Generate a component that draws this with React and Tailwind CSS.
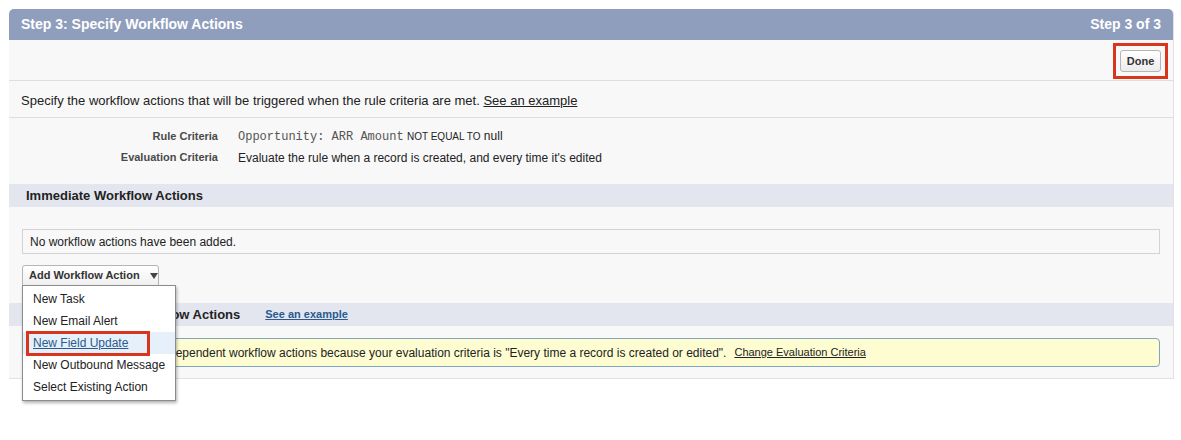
import { useState } from "react";

const menuItems = [
  "New Task",
  "New Email Alert",
  "New Field Update",
  "New Outbound Message",
  "Select Existing Action",
];

const SectionHeader = ({ title, link }) => (
  <div className="flex h-[23px] items-center gap-[25px] bg-[#e3e6ee] pl-[17px]">
    <h3 className="text-[13px] font-bold text-[#222]">{title}</h3>
    {link && (
      <a href="#" className="text-[11px] font-bold text-[#2a5a8f] underline">
        {link}
      </a>
    )}
  </div>
);

export default function App() {
  const [menuOpen] = useState(true);

  return (
    <div className="min-h-[440px] bg-white p-[9px] font-['Liberation_Sans',Arial,sans-serif] text-[#222]">
      <div className="w-[1165px] overflow-visible rounded-t-[5px] border-b border-r border-[#e2e2e2] bg-[#f8f8f8]">
        {/* title bar */}
        <div className="flex h-[31px] items-center justify-between rounded-t-[5px] bg-[#8f9ebc] px-[12px] text-[14px] font-bold text-white">
          <span>Step 3: Specify Workflow Actions</span>
          <span>Step 3 of 3</span>
        </div>

        {/* button row */}
        <div className="flex h-[41px] items-center justify-end border-b border-[#dedede] pr-[5px] pt-[2px]">
          <div className="flex h-[36px] w-[55px] items-center justify-center border-[3px] border-[#d9351c]">
            <button className="h-[22px] w-[41px] rounded-[3px] border border-[#b5b5b5] bg-gradient-to-b from-white to-[#ececec] text-[11px] font-bold text-[#333]">
              Done
            </button>
          </div>
        </div>

        {/* description */}
        <div className="flex h-[37px] items-center border-b border-[#dedede] pl-[12px] pt-[3px] text-[13px]">
          <span>
            Specify the workflow actions that will be triggered when the rule criteria are met.{" "}
            <a href="#" className="text-[#222] underline">
              See an example
            </a>
          </span>
        </div>

        {/* criteria */}
        <div className="flex flex-col pb-[16px] pt-[8px]">
          <div className="flex h-[21px] items-center">
            <div className="w-[209px] text-right text-[11px] font-bold text-[#4a4a4a]">Rule Criteria</div>
            <div className="pl-[20px] text-[12px]">
              <span className="font-['Liberation_Mono','Courier_New',monospace] text-[#555]">Opportunity: ARR Amount</span>{" "}
              <span className="text-[10px] uppercase">Not equal to</span> null
            </div>
          </div>
          <div className="flex h-[21px] items-center">
            <div className="w-[209px] text-right text-[11px] font-bold text-[#4a4a4a]">Evaluation Criteria</div>
            <div className="pl-[20px] text-[12px]">
              Evaluate the rule when a record is created, and every time it's edited
            </div>
          </div>
        </div>

        <SectionHeader title="Immediate Workflow Actions" />

        <div className="px-[13px] pt-[22px]">
          <div className="flex h-[25px] items-center border border-[#d2d2d2] bg-[#f8f8f8] pl-[7px] text-[12px]">
            No workflow actions have been added.
          </div>
          <div className="relative mt-[11px] h-[21px] w-[137px]">
            <button className="flex h-[21px] w-[137px] items-center gap-[10px] whitespace-nowrap rounded-t-[3px] border border-[#b5b5b5] bg-gradient-to-b from-white to-[#f0f0f0] pl-[6px] text-[11px] font-bold text-[#333]">
              Add Workflow Action
              <svg width="8" height="6" viewBox="0 0 8 6">
                <path d="M0 0h8L4 6z" fill="#444" />
              </svg>
            </button>
            {menuOpen && (
              <ul className="absolute left-0 top-[20px] z-10 w-[154px] border border-[#8c8c8c] bg-white py-[2px] text-[12px] shadow-[1px_2px_3px_rgba(0,0,0,0.3)]">
                {menuItems.map((item) => {
                  const active = item === "New Field Update";
                  return (
                    <li
                      key={item}
                      className={`relative flex h-[22px] items-center whitespace-nowrap pl-[10px] ${
                        active ? "bg-[#e6f0fa] text-[#2a5a8f] underline" : ""
                      }`}
                    >
                      {item}
                      {active && (
                        <span className="absolute left-[3px] top-[-1px] h-[25px] w-[124px] border-[3px] border-[#d9351c]" />
                      )}
                    </li>
                  );
                })}
              </ul>
            )}
          </div>
        </div>

        <div className="mt-[17px]">
          <SectionHeader title="Time-Dependent Workflow Actions" link="See an example" />
        </div>

        <div className="px-[13px] pb-[11px] pt-[12px]">
          <div className="flex h-[29px] items-center whitespace-nowrap rounded-[4px] border border-[#7fa6c0] bg-[#fefdd2] pl-[33px] text-[12px]">
            <span>
              You cannot add time-dependent workflow actions because your evaluation criteria is "Every time a record is created or edited".
            </span>
            <a href="#" className="ml-[8px] text-[11px] text-[#222] underline">
              Change Evaluation Criteria
            </a>
          </div>
        </div>
      </div>
    </div>
  );
}
